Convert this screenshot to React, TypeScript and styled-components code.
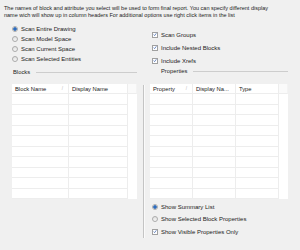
import React from 'react';
import styled, { createGlobalStyle } from 'styled-components';

const Global = createGlobalStyle`
  html, body {
    margin: 0;
    padding: 0;
    background: #f0f0f0;
  }
  body {
    font-family: 'Liberation Sans', Arial, sans-serif;
    color: #222;
  }
`;

const S = {
  Dialog: styled.div`
    width: 300px;
    height: 250px;
    overflow: hidden;
    display: flex;
    flex-direction: column;
  `,

  Intro: styled.div`
    height: 24px;
    box-sizing: border-box;
    padding: 5px 0 0 4px;
    font-size: 5.5px;
    line-height: 6.6px;
    white-space: nowrap;
  `,

  Columns: styled.div`
    display: grid;
    grid-template-columns: 143px 1px 1fr;
    flex: 1;
  `,

  Left: styled.div`
    display: flex;
    flex-direction: column;
    padding: 0 6px 0 12px;
  `,

  Splitter: styled.div`
    background: #c4c4c4;
    box-shadow: 1px 0 0 #fafafa;
    margin: 61px 0 12px 0;
  `,

  Right: styled.div`
    display: flex;
    flex-direction: column;
    padding: 0 12px 0 6px;
  `,

  Options: styled.div<{ $row: number; $top: number; $indent?: number }>`
    display: grid;
    grid-auto-rows: ${(p) => p.$row}px;
    padding-top: ${(p) => p.$top}px;
    padding-left: ${(p) => p.$indent ?? 0}px;
  `,

  Option: styled.label`
    display: flex;
    align-items: center;
    gap: 3px;
    font-size: 6px;
    white-space: nowrap;
  `,

  Radio: styled.span<{ $on?: boolean }>`
    width: 6px;
    height: 6px;
    box-sizing: border-box;
    border-radius: 50%;
    border: 1px solid #ababab;
    background: ${(p) =>
      p.$on ? 'radial-gradient(circle, #2d6cbf 0 1.5px, #dce6f1 2px)' : 'linear-gradient(#e2e2e2, #f6f6f6)'};
    flex: none;
  `,

  Check: styled.span`
    width: 6px;
    height: 6px;
    box-sizing: border-box;
    border: 1px solid #a0a0a0;
    background: #fff;
    flex: none;
    display: flex;
    align-items: center;
    justify-content: center;
  `,

  Group: styled.div<{ $top: number; $bottom: number; $indent: number }>`
    display: flex;
    align-items: center;
    gap: 6px;
    font-size: 5.8px;
    height: 8px;
    margin: ${(p) => `${p.$top}px 0 ${p.$bottom}px ${p.$indent}px`};
  `,

  GroupLine: styled.div`
    flex: 1;
    height: 1px;
    background: #cdcdcd;
  `,

  Table: styled.div<{ $cols: string }>`
    display: grid;
    grid-template-columns: ${(p) => p.$cols};
    grid-template-rows: 10px;
    grid-auto-rows: 10.5px;
    background: #fff;
  `,

  Head: styled.div<{ $filler?: boolean }>`
    font-size: 5.8px;
    line-height: 10px;
    padding-left: 3px;
    white-space: nowrap;
    overflow: hidden;
    position: relative;
    border-right: 1px solid ${(p) => (p.$filler ? '#f3f3f3' : '#ededed')};
    background: ${(p) => (p.$filler ? '#fafafa' : '#fff')};
    border-bottom: 1px solid #ededed;
  `,

  Sort: styled.span`
    position: absolute;
    right: 5px;
    top: 0;
    color: #b8b8b8;
    font-size: 4.5px;
  `,

  Cell: styled.div<{ $filler?: boolean }>`
    border-right: ${(p) => (p.$filler ? 'none' : '1px solid #ededed')};
    border-bottom: ${(p) => (p.$filler ? 'none' : '1px solid #ededed')};
  `,
};

const Tick: React.FC = () => (
  <svg width="5" height="5" viewBox="0 0 5 5">
    <path d="M0.8 2.6 L2 3.9 L4.2 0.9" fill="none" stroke="#3a62b0" strokeWidth="0.9" />
  </svg>
);

const RadioOption: React.FC<{ label: string; on?: boolean }> = ({ label, on }) => (
  <S.Option>
    <S.Radio $on={on} />
    {label}
  </S.Option>
);

const CheckOption: React.FC<{ label: string }> = ({ label }) => (
  <S.Option>
    <S.Check>
      <Tick />
    </S.Check>
    {label}
  </S.Option>
);

interface GridProps {
  cols: string;
  headers: { title: string; sort?: boolean }[];
  rows: number;
}

const Grid: React.FC<GridProps> = ({ cols, headers, rows }) => (
  <S.Table $cols={cols}>
    {headers.map(({ title, sort }) => (
      <S.Head key={title}>
        {title}
        {sort && <S.Sort>/</S.Sort>}
      </S.Head>
    ))}
    <S.Head $filler />
    {Array.from({ length: rows }).map((_, r) => (
      <React.Fragment key={r}>
        {headers.map(({ title }) => (
          <S.Cell key={title} />
        ))}
        <S.Cell $filler />
      </React.Fragment>
    ))}
  </S.Table>
);

const App: React.FC = () => (
  <S.Dialog>
    <Global />
    <S.Intro>
      The names of block and attribute you select will be used to form final report. You can specify different display
      <br />
      name wich will show up in column headers For additional options use right click items in the list
    </S.Intro>
    <S.Columns>
      <S.Left>
        <S.Options $row={10} $top={0}>
          <RadioOption label="Scan Entire Drawing" on />
          <RadioOption label="Scan Model Space" />
          <RadioOption label="Scan Current Space" />
          <RadioOption label="Scan Selected Entities" />
        </S.Options>
        <S.Group $top={4} $bottom={8} $indent={1}>
          Blocks
          <S.GroupLine />
        </S.Group>
        <Grid
          cols="57px 59px 9px"
          headers={[{ title: 'Block Name', sort: true }, { title: 'Display Name' }]}
          rows={10}
        />
      </S.Left>
      <S.Splitter />
      <S.Right>
        <S.Options $row={13} $top={4} $indent={2}>
          <CheckOption label="Scan Groups" />
          <CheckOption label="Include Nested Blocks" />
          <CheckOption label="Include Xrefs" />
        </S.Options>
        <S.Group $top={0} $bottom={9} $indent={11}>
          Properties
          <S.GroupLine />
        </S.Group>
        <Grid
          cols="43px 43px 43px 9px"
          headers={[{ title: 'Property', sort: true }, { title: 'Display Na...' }, { title: 'Type' }]}
          rows={10}
        />
        <S.Options $row={12.5} $top={1.5} $indent={2}>
          <RadioOption label="Show Summary List" on />
          <RadioOption label="Show Selected Block Properties" />
          <CheckOption label="Show Visible Properties Only" />
        </S.Options>
      </S.Right>
    </S.Columns>
  </S.Dialog>
);

export default App;
